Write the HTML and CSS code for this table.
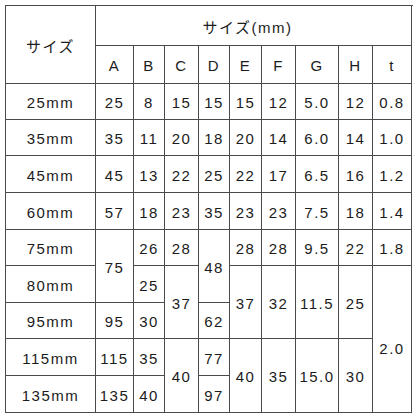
FILE: index.html
```html
<!DOCTYPE html>
<html>
<head>
<meta charset="utf-8">
<link rel="stylesheet" href="styles.css">
</head>
<body>
<table class="spec">
<colgroup>
<col class="c0"><col class="c1"><col class="c2"><col class="c3"><col class="c4"><col class="c5"><col class="c6"><col class="c7"><col class="c8"><col class="c9"><col class="c10">
</colgroup>
<tr class="h1"><td rowspan="2" class="jp">サイズ</td><td colspan="10" class="jp title">サイズ(mm)</td></tr>
<tr class="h2"><td>A</td><td>B</td><td>C</td><td>D</td><td>E</td><td>F</td><td>G</td><td>H</td><td>t</td></tr>
<tr class="r36"><td>25mm</td><td>25</td><td>8</td><td>15</td><td>15</td><td>15</td><td>12</td><td>5.0</td><td>12</td><td>0.8</td></tr>
<tr class="r36"><td>35mm</td><td>35</td><td>11</td><td>20</td><td>18</td><td>20</td><td>14</td><td>6.0</td><td>14</td><td>1.0</td></tr>
<tr class="r37"><td>45mm</td><td>45</td><td>13</td><td>22</td><td>25</td><td>22</td><td>17</td><td>6.5</td><td>16</td><td>1.2</td></tr>
<tr class="r37"><td>60mm</td><td>57</td><td>18</td><td>23</td><td>35</td><td>23</td><td>23</td><td>7.5</td><td>18</td><td>1.4</td></tr>
<tr class="r36"><td>75mm</td><td rowspan="2">75</td><td>26</td><td>28</td><td rowspan="2">48</td><td>28</td><td>28</td><td>9.5</td><td>22</td><td>1.8</td></tr>
<tr class="r37"><td>80mm</td><td>25</td><td rowspan="2">37</td><td rowspan="2">37</td><td rowspan="2">32</td><td rowspan="2">11.5</td><td rowspan="2">25</td><td rowspan="4" class="low">2.0</td></tr>
<tr class="r36"><td>95mm</td><td>95</td><td>30</td><td>62</td></tr>
<tr class="r37"><td>115mm</td><td>115</td><td>35</td><td rowspan="2">40</td><td>77</td><td rowspan="2">40</td><td rowspan="2">35</td><td rowspan="2">15.0</td><td rowspan="2">30</td></tr>
<tr class="r37"><td>135mm</td><td>135</td><td>40</td><td>97</td></tr>
</table>
</body>
</html>
```
FILE: styles.css
```css
html, body {
  margin: 0;
  padding: 0;
  background: #ffffff;
}
.spec {
  margin: 5px 0 0 5px;
  border-collapse: collapse;
  table-layout: fixed;
  width: 407px;
  font-family: "Liberation Sans", Arial, "Noto Sans CJK JP", sans-serif;
  font-size: 15px;
  color: #1c1c1c;
}
.spec td {
  border: 1px solid #4a4a4a;
  padding: 2px 0 0 0;
  text-align: center;
  vertical-align: middle;
  letter-spacing: 1.5px;
  white-space: nowrap;
  overflow: hidden;
}
.c0 { width: 90px; }
.c1 { width: 38px; }
.c2 { width: 31px; }
.c3 { width: 34px; }
.c4 { width: 31px; }
.c5 { width: 32px; }
.c6 { width: 34px; }
.c7 { width: 43px; }
.c8 { width: 34px; }
.c9 { width: 39px; }
.jp {
  font-family: "Liberation Sans", "Noto Sans CJK JP", sans-serif;
  letter-spacing: 1px;
}
.spec td.title { padding-right: 12px; }
.h1 { height: 40px; }
.h2 { height: 38px; }
.r36 { height: 36px; }
.r37 { height: 37px; }
.spec td.low { padding-top: 18px; }
```
